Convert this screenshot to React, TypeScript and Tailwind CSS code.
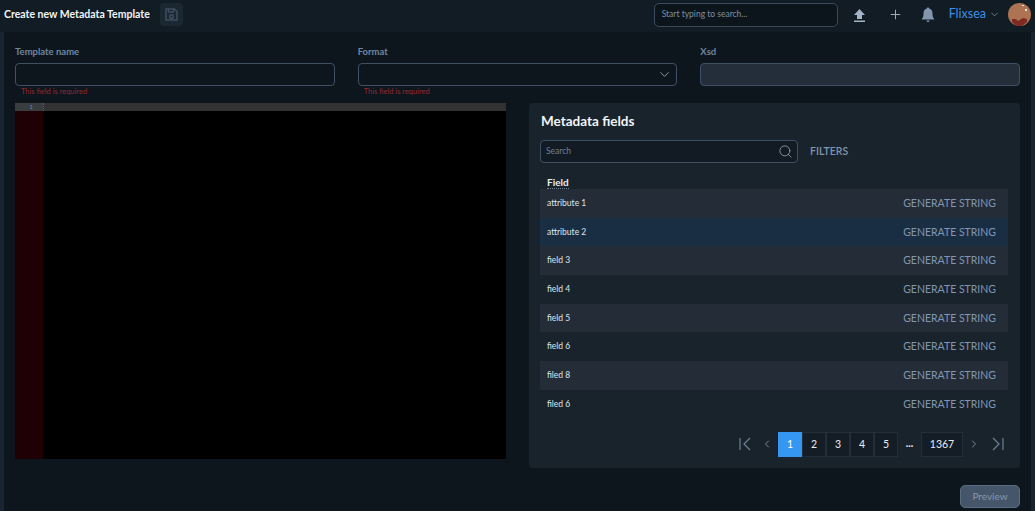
import { ChevronDown, ChevronLeft, ChevronRight, Plus, Search } from "lucide-react";

const fields = ["attribute 1", "attribute 2", "field 3", "field 4", "field 5", "field 6", "filed 8", "filed 6"];
const rowColors = ["bg-[#232c37]", "bg-[#1a2e43]", "bg-[#232c37]", "bg-[#19232c]", "bg-[#232c37]", "bg-[#19232c]", "bg-[#232c37]", "bg-[#19232c]"];
const pages = ["1", "2", "3", "4", "5"];

function Field({ label, error, children }: { label: string; error?: boolean; children: React.ReactNode }) {
  return (
    <div className="flex-1 min-w-0">
      <div className="h-[15px] text-[9.500px] leading-[15px] font-bold text-[#6f86a1] mb-[4px]">{label}</div>
      {children}
      <div className="h-[17px] pl-[6px] text-[7.500px] leading-[11px] text-[#8f2a33]">{error && "This field is required"}</div>
    </div>
  );
}

function App() {
  return (
    <div className="w-[1035px] h-[511px] overflow-hidden flex flex-col bg-[#0e161d] font-['Lato','Noto_Sans',sans-serif]">
      {/* top bar */}
      <header className="h-[32px] shrink-0 bg-[#111c25] flex items-center pl-[4px] pr-[4px] pb-[3px]">
        <h1 className="text-[10.500px] font-bold text-[#f1f4f7] w-[155px] whitespace-nowrap">Create new Metadata Template</h1>
        <button className="w-[23px] h-[23px] ml-[1px] rounded-[4px] bg-[#1b2832] flex items-center justify-center">
          <svg width="13" height="13" viewBox="0 0 13 13" fill="none" stroke="#3f4e5e" strokeWidth="1.500">
            <path d="M1 1h8.500L12 3.500V12H1zM3.500 1v3h5V1" />
            <circle cx="6.500" cy="8.500" r="1.800" />
          </svg>
        </button>
        <div className="ml-auto w-[184px] h-[24px] rounded-[5px] border border-[#3a4a5c] bg-[#0d151c] px-[7px] flex items-center text-[8.500px] text-[#7d8ea1]">
          Start typing to search...
        </div>
        <svg className="ml-[15px]" width="13" height="14" viewBox="0 0 13 14" fill="#a3b4c6">
          <path d="M6.500 1 12 7H9v4H4V7H1zM1 12.500h11V14H1z" />
        </svg>
        <Plus className="ml-[22px] text-[#a3b4c6]" size={15} strokeWidth={1.5} />
        <svg className="ml-[18px]" width="14" height="16" viewBox="0 0 14 16" fill="#8396ab">
          <path d="M7 0.500c.8 0 1.200.5 1.200 1.100C10.500 2.300 11.500 4 11.500 6.500c0 3 .6 4.500 2 6H.5c1.400-1.500 2-3 2-6 0-2.500 1-4.200 3.300-4.900C5.800 1 6.200.5 7 .5zM5.500 13.500h3A1.500 1.500 0 0 1 5.500 13.500z" />
        </svg>
        <span className="ml-[14px] text-[12.500px] text-[#3f8fe6]">Flixsea</span>
        <ChevronDown className="ml-[3px] text-[#8fa1b5]" size={11} strokeWidth={1.5} />
        <div className="ml-[8px] w-[23px] h-[23px] rounded-full overflow-hidden">
          <svg width="23" height="23" viewBox="0 0 23 23">
            <rect width="23" height="23" fill="#ad7353" />
            <path d="M4 16h4l2 2 5-3 4 1v3l-5 4H8l-4-4z" fill="#7d2b22" />
            <path d="M14 2h2v1h-2zM17 6h2v2h-2z" fill="#eee5dc" />
          </svg>
        </div>
      </header>

      {/* page body */}
      <div className="flex-1 min-h-0 border-l-[4px] border-r-[4px] border-[#18242f] pl-[11px] pr-[11px] pt-[12px] flex flex-col">
        <div className="flex gap-[23px]">
          <Field label="Template name" error>
            <div className="h-[23px] rounded-[4px] border border-[#3f5064]" />
          </Field>
          <Field label="Format" error>
            <div className="h-[23px] rounded-[4px] border border-[#3f5064] flex items-center justify-end pr-[4px]">
              <ChevronDown className="text-[#8fa1b5]" size={15} strokeWidth={1.5} />
            </div>
          </Field>
          <Field label="Xsd">
            <div className="h-[23px] rounded-[4px] border border-[#3f5064] bg-[#232e3a]" />
          </Field>
        </div>

        <div className="flex gap-[23px] items-start">
          {/* code editor */}
          <div className="w-[491px] h-[356px] bg-black flex flex-col">
            <div className="h-[8px] flex bg-[#323232]">
              <div className="w-[28px] bg-[#3a3d3f] text-[6px] leading-[8px] text-[#4a8fd0] text-right pr-[10px]">1</div>
              <div className="border-l border-dotted border-[#4d6478]" />
            </div>
            <div className="flex-1 w-[28px] bg-[#1f0004]" />
          </div>

          {/* metadata fields */}
          <section className="flex-1 h-[365px] rounded-[4px] bg-[#19232c] pl-[11px] pr-[12px] pt-[10px]">
            <h2 className="text-[13.500px] leading-[17px] font-bold text-[#f1f4f7] ml-[1px]">Metadata fields</h2>
            <div className="flex items-center mt-[10px]">
              <div className="w-[258px] h-[23px] rounded-[4px] border border-[#3f5064] bg-[#121b23] flex items-center justify-between pl-[5px] pr-[4px] text-[8.500px] text-[#6f8093]">
                Search
                <Search className="text-[#9aa9b8]" size={15} strokeWidth={1.25} />
              </div>
              <button className="ml-[12px] pt-[1px] text-[10.500px] font-semibold text-[#7f95ae]">FILTERS</button>
            </div>
            <div className="h-[14px] mt-[12px] pl-[7px] text-[10px] leading-[14px] font-bold text-[#e8edf2]">
              <span className="inline-block h-[14px] border-b border-dotted border-[#6f8093]">Field</span>
            </div>
            <div className="flex flex-col">
              {fields.map((name, i) => (
                <div key={name + i} className={`h-[28.700px] flex items-center justify-between pl-[7px] pr-[12px] ${rowColors[i]}`}>
                  <span className="text-[8.500px] text-[#dfe5ea]">{name}</span>
                  <button className="pt-[1px] text-[10.500px] text-[#8097b3]">GENERATE STRING</button>
                </div>
              ))}
            </div>
            <nav className="flex items-center justify-end mt-[13px] pr-[4px] text-[10.500px] text-[#e8edf2]">
              <svg className="mr-[10px]" width="12" height="14" viewBox="0 0 12 14" fill="none" stroke="#6f8093" strokeWidth="1.200">
                <path d="M1 1v12M11 1 5 7l6 6" />
              </svg>
              <ChevronLeft className="mr-[5px] text-[#8295aa]" size={12} strokeWidth={1.75} />
              {pages.map((p) => (
                <div
                  key={p}
                  className={`w-[24px] h-[25px] pt-[1px] flex items-center justify-center ${p === "1" ? "bg-[#3597f2] text-white" : "bg-[#141d26] border border-[#222e3a]"}`}
                >
                  {p}
                </div>
              ))}
              <div className="w-[23px] text-center font-bold">...</div>
              <div className="w-[42px] h-[25px] pt-[1px] flex items-center justify-center bg-[#141d26] border border-[#222e3a]">1367</div>
              <ChevronRight className="ml-[5px] text-[#8295aa]" size={12} strokeWidth={1.75} />
              <svg className="ml-[12px]" width="12" height="14" viewBox="0 0 12 14" fill="none" stroke="#6f8093" strokeWidth="1.200">
                <path d="M11 1v12M1 1l6 6-6 6" />
              </svg>
            </nav>
          </section>
        </div>

        <div className="flex justify-end mt-[17px]">
          <button className="w-[60px] h-[23px] rounded-[5px] bg-[#46566a] border border-[#5a6b80] text-[10px] text-[#8598ad]">Preview</button>
        </div>
      </div>
    </div>
  );
}

export default App;
